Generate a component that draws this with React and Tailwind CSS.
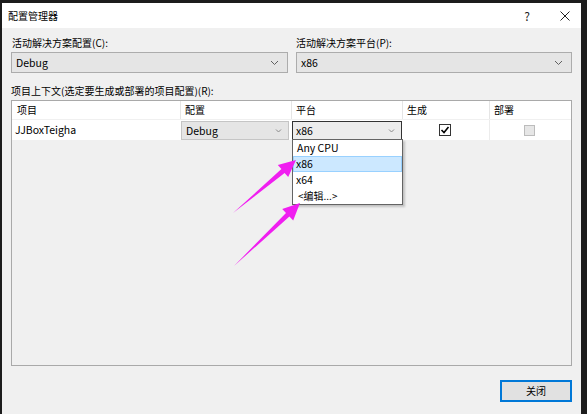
import React from "react";

const FONT = { fontFamily: '"Noto Sans CJK SC", "Noto Sans", sans-serif' };

function Chevron({ className = "" }) {
  return (
    <svg width="9" height="6" viewBox="0 0 9 6" className={className}>
      <polyline points="1,1 4.5,4.5 8,1" fill="none" stroke="#606060" strokeWidth="1" />
    </svg>
  );
}

function SmallChevron() {
  return (
    <svg width="7" height="4" viewBox="0 0 7 4">
      <polyline points="1,0.5 3.5,3 6,0.5" fill="none" stroke="#8a8a8a" strokeWidth="1" />
    </svg>
  );
}

function Combo({ value }) {
  return (
    <div className="h-[21px] mt-[2px] bg-[#e5e5e5] border border-[#acacac] flex items-center pl-[4px] pr-[8px] text-[10.5px] text-[#000]">
      <span>{value}</span>
      <Chevron className="ml-auto" />
    </div>
  );
}

export default function App() {
  return (
    <div
      className="relative w-[587px] h-[414px] bg-[#1c1c1c] pt-[3px] pl-[2px] pr-[6px] overflow-hidden text-[10px] leading-[14px] text-black"
      style={FONT}
    >
      <div className="flex flex-col h-[411px] bg-[#f0f0f0]">
        {/* Title bar */}
        <div className="h-[25px] bg-white flex items-center pl-[6px] pr-[11px] shrink-0">
          <span className="text-[10px]">配置管理器</span>
          <span className="ml-auto mr-[30px] text-[12px] text-[#222]">?</span>
          <svg width="10" height="10" viewBox="0 0 10 10">
            <path d="M0.5 0.5 L9.5 9.5 M9.5 0.5 L0.5 9.5" stroke="#222" strokeWidth="1" />
          </svg>
        </div>

        {/* Body */}
        <div className="flex-1 px-[9px] pt-[8px] flex flex-col">
          <div className="flex gap-[8px]">
            <div className="w-[277px] flex flex-col">
              <div className="h-[14px] pl-[1px]">活动解决方案配置(C):</div>
              <Combo value="Debug" />
            </div>
            <div className="flex-1 flex flex-col">
              <div className="h-[14px]">活动解决方案平台(P):</div>
              <Combo value="x86" />
            </div>
          </div>

          <div className="h-[14px] mt-[11px]">项目上下文(选定要生成或部署的项目配置)(R):</div>

          {/* Grid */}
          <div className="mt-[2px] h-[266px] border border-[#a9a9a9] bg-[#f0f0f0] flex flex-col">
            <div className="h-[19px] bg-white flex border-b border-[#f0f0f0]">
              <div className="w-[169px] pl-[5px] flex items-center border-r border-[#e5e5e5]">项目</div>
              <div className="w-[111px] pl-[4px] flex items-center border-r border-[#e5e5e5]">配置</div>
              <div className="w-[111px] pl-[4px] flex items-center border-r border-[#e5e5e5]">平台</div>
              <div className="w-[87px] pl-[4px] flex items-center border-r border-[#e5e5e5]">生成</div>
              <div className="flex-1 pl-[4px] flex items-center">部署</div>
            </div>
            <div className="h-[20px] bg-white flex text-[10.5px]">
              <div className="w-[169px] pl-[3px] flex items-center">JJBoxTeigha</div>
              <div className="w-[111px] pr-[3px] pt-[1px]">
                <div className="h-[19px] bg-[#e5e5e5] border border-[#c5c5c5] flex items-center pl-[4px] pr-[6px]">
                  <span>Debug</span>
                  <span className="ml-auto flex"><SmallChevron /></span>
                </div>
              </div>
              <div className="relative w-[111px] pr-[1px] pt-[1px]">
                <div className="h-[19px] bg-[#ececec] border border-[#333] flex items-center pl-[3px] pr-[6px]">
                  <span>x86</span>
                  <span className="ml-auto flex"><SmallChevron /></span>
                </div>
                {/* Dropdown */}
                <div className="absolute left-0 top-[19px] w-[111px] h-[66px] bg-white border border-[#646464] shadow-[2px_2px_2px_rgba(0,0,0,0.2)] flex flex-col z-10">
                  <div className="h-[16px] pl-[4px] flex items-center">Any CPU</div>
                  <div className="h-[16px] bg-[#cce8ff] border border-[#99d1ff] pl-[2px] flex items-center">x86</div>
                  <div className="h-[16px] pl-[3px] flex items-center">x64</div>
                  <div className="h-[16px] pl-[5px] flex items-center text-[10px]">&lt;编辑...&gt;</div>
                </div>
              </div>
              <div className="w-[87px] flex items-center justify-center border-r border-[#ececec]">
                <div className="w-[12px] h-[12px] border border-[#333] bg-white flex items-center justify-center ml-[-2px]">
                  <svg width="10" height="10" viewBox="0 0 10 10">
                    <polyline points="1.5,5 4,7.5 8.5,2" fill="none" stroke="#000" strokeWidth="1.6" />
                  </svg>
                </div>
              </div>
              <div className="flex-1 flex items-center justify-center">
                <div className="w-[11px] h-[11px] border border-[#bcbcbc] bg-[#e6e6e6] ml-[-3px]" />
              </div>
            </div>
          </div>

          <div className="flex justify-end mt-[14px]">
            <button className="w-[72px] h-[22px] bg-[#e1e1e1] border-2 border-[#0078d7] flex items-center justify-center text-[10px]">
              关闭
            </button>
          </div>
        </div>
      </div>

      {/* Annotation arrows */}
      <svg className="absolute left-0 top-0 pointer-events-none z-20" width="587" height="414" viewBox="0 0 587 414">
        <polygon
          points="233,213 281.4,169.1 277.8,164.9 296,160 288.2,177.1 284.6,172.9"
          fill="#f01ef0"
        />
        <polygon
          points="234,266 286,212.9 282.2,208.9 300,203 293.2,220.5 289.4,216.5"
          fill="#f01ef0"
        />
      </svg>
    </div>
  );
}
